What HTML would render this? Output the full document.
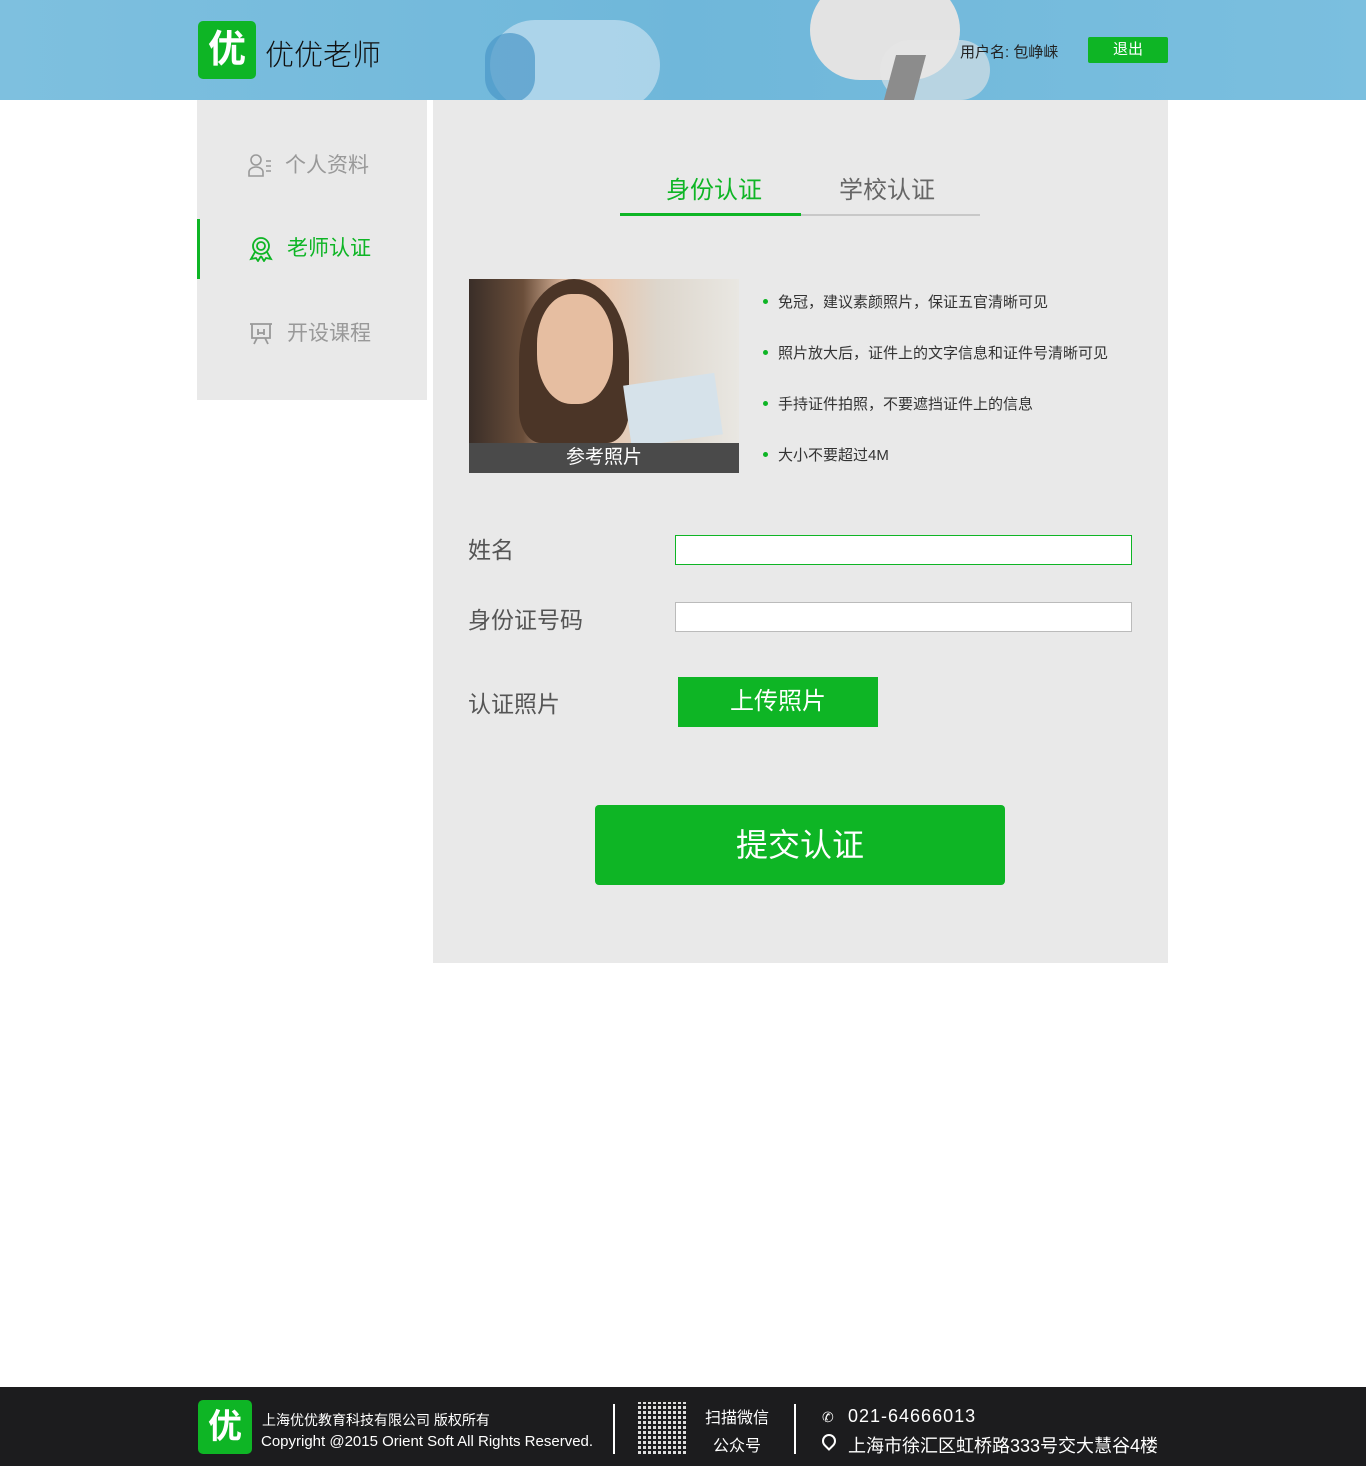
<!DOCTYPE html>
<html><head><meta charset="utf-8"><style>
*{margin:0;padding:0;box-sizing:border-box}
body{width:1366px;height:1466px;position:relative;background:#fff;font-family:"Liberation Sans","Noto Sans CJK SC",sans-serif;overflow:hidden}
.abs{position:absolute}
#hdr{left:0;top:0;width:1366px;height:100px;background:linear-gradient(90deg,#7ec0df,#6fb7da 50%,#7bbfdf);overflow:hidden}
.logo{background:#0eb525;border-radius:5px;color:#fff;font-weight:bold;text-align:center}
.side{left:197px;top:100px;width:230px;height:300px;background:#e9e9e9}
.nav{position:absolute;left:0;width:230px;height:60px;line-height:60px;font-size:21px;color:#999;padding-left:90px}
.main{left:433px;top:100px;width:735px;height:863px;background:#e9e9e9}
.lbl{position:absolute;font-size:23px;color:#555}
.inp{position:absolute;left:242px;width:457px;height:30px;background:#fff;border:1px solid #bbb}
.tip{position:absolute;left:345px;font-size:15px;color:#333}
.tip:before{content:"";position:absolute;left:-15px;top:8px;width:5px;height:5px;border-radius:50%;background:#0eb525}
#ftr{left:0;top:1387px;width:1366px;height:79px;background:#1c1c1e;color:#fff}
</style></head><body>
<div id="hdr" class="abs">
 <div class="abs" style="left:490px;top:20px;width:170px;height:90px;border-radius:60px;background:rgba(220,235,245,.55)"></div>
 <div class="abs" style="left:485px;top:33px;width:50px;height:70px;border-radius:30px;background:#4a97c8;opacity:.7"></div>
 <div class="abs" style="left:810px;top:-20px;width:150px;height:100px;border-radius:50px;background:#e3e3e3"></div>
 <div class="abs" style="left:880px;top:40px;width:110px;height:60px;border-radius:40px;background:rgba(230,230,230,.6)"></div>
 <div class="abs" style="left:890px;top:55px;width:30px;height:45px;background:#8c8c8c;transform:skewX(-15deg)"></div>
 <div class="abs logo" style="left:198px;top:21px;width:58px;height:58px;font-size:38px;line-height:58px">优</div>
 <div class="abs" style="left:265px;top:32px;font-size:29px;color:#111;font-weight:300">优优老师</div>
 <div class="abs" style="left:960px;top:41px;font-size:15px;color:#222">用户名: 包峥崃</div>
 <div class="abs" style="left:1088px;top:37px;width:80px;height:26px;background:#0eb525;border-radius:2px;color:#fff;font-size:15px;text-align:center;line-height:26px">退出</div>
</div>
<div class="abs side">
 <div class="nav" style="top:36px;padding-left:88px">个人资料</div>
 <svg class="abs" style="left:50px;top:53px" width="26" height="26" viewBox="0 0 26 26" fill="none" stroke="#999" stroke-width="1.6"><circle cx="9" cy="7" r="5"/><path d="M2 23v-4a7 5 0 0 1 14 0v4z"/><path d="M19 8h5M19 13h5M19 18h5"/></svg>
 <div class="abs" style="left:0;top:119px;width:3px;height:60px;background:#0eb525"></div>
 <div class="nav" style="top:119px;color:#0eb525">老师认证</div>
 <svg class="abs" style="left:52px;top:136px" width="24" height="26" viewBox="0 0 24 26" fill="none" stroke="#0eb525" stroke-width="1.8"><circle cx="12" cy="10" r="8"/><circle cx="12" cy="10" r="4"/><path d="M6 16l-4 7 5-1 2 3 3-5M18 16l4 7-5-1-2 3-3-5"/></svg>
 <div class="nav" style="top:204px">开设课程</div>
 <svg class="abs" style="left:52px;top:222px" width="24" height="24" viewBox="0 0 24 24" fill="none" stroke="#999" stroke-width="1.8"><path d="M1 2h22M3 2v14h18V2M8 16l-3 6M16 16l3 6M9 7v6M15 7v6M9 11h6"/></svg>
</div>
<div class="abs main">
 <div class="abs" style="left:187px;top:114px;width:360px;height:2px;background:#c8c8c8"></div>
 <div class="abs" style="left:187px;top:113px;width:181px;height:3px;background:#0eb525"></div>
 <div class="abs" style="left:233px;top:70px;font-size:24px;color:#0eb525">身份认证</div>
 <div class="abs" style="left:406px;top:70px;font-size:24px;color:#666">学校认证</div>
 <div class="abs" style="left:36px;top:179px;width:270px;height:194px;background:linear-gradient(90deg,#3a2e28 0,#6a4e3a 20%,#d9b49a 35%,#e8c6ad 50%,#ddd6cc 70%,#e9e7e2 100%);overflow:hidden">
  <div class="abs" style="left:50px;top:0;width:110px;height:164px;border-radius:50% 50% 20% 20%;background:#4b3527"></div>
  <div class="abs" style="left:68px;top:15px;width:76px;height:110px;border-radius:45%;background:#e6bea1"></div>
  <div class="abs" style="left:158px;top:100px;width:92px;height:62px;background:#d6e2ea;transform:rotate(-8deg)"></div>
  <div class="abs" style="left:0;top:164px;width:270px;height:30px;background:#4a4a4a;color:#fff;font-size:19px;text-align:center;line-height:30px">参考照片</div>
 </div>
 <div class="tip" style="top:191px">免冠，建议素颜照片，保证五官清晰可见</div>
 <div class="tip" style="top:242px">照片放大后，证件上的文字信息和证件号清晰可见</div>
 <div class="tip" style="top:293px">手持证件拍照，不要遮挡证件上的信息</div>
 <div class="tip" style="top:344px">大小不要超过4M</div>
 <div class="lbl" style="left:35px;top:431px">姓名</div>
 <div class="inp" style="top:435px;border-color:#0eb525"></div>
 <div class="lbl" style="left:35px;top:501px">身份证号码</div>
 <div class="inp" style="top:502px"></div>
 <div class="lbl" style="left:35px;top:585px">认证照片</div>
 <div class="abs" style="left:245px;top:577px;width:200px;height:50px;background:#0eb525;color:#fff;font-size:24px;text-align:center;line-height:50px">上传照片</div>
 <div class="abs" style="left:162px;top:705px;width:410px;height:80px;background:#0eb525;border-radius:4px;color:#fff;font-size:32px;text-align:center;line-height:80px">提交认证</div>
</div>
<div id="ftr" class="abs">
 <div class="abs logo" style="left:198px;top:13px;width:54px;height:54px;font-size:34px;line-height:54px">优</div>
 <div class="abs" style="left:262px;top:23px;font-size:14px">上海优优教育科技有限公司 版权所有</div>
 <div class="abs" style="left:261px;top:46px;font-size:15px">Copyright @2015 Orient Soft All Rights Reserved.</div>
 <div class="abs" style="left:613px;top:17px;width:2px;height:50px;background:#fff"></div>
 <div class="abs" style="left:638px;top:15px;width:50px;height:52px;background:repeating-linear-gradient(0deg,transparent 0 3px,#1c1c1e 3px 5px),repeating-linear-gradient(90deg,#fff 0 3px,#1c1c1e 3px 5px);opacity:.85"></div>
 <div class="abs" style="left:705px;top:17px;font-size:16px">扫描微信</div>
 <div class="abs" style="left:713px;top:45px;font-size:16px">公众号</div>
 <div class="abs" style="left:794px;top:17px;width:2px;height:50px;background:#fff"></div>
 <div class="abs" style="left:822px;top:22px;font-size:14px">✆</div>
 <div class="abs" style="left:848px;top:19px;font-size:18px;letter-spacing:1px">021-64666013</div>
 <div class="abs" style="left:822px;top:47px;width:14px;height:14px;border:2px solid #fff;border-radius:50% 50% 50% 0;transform:rotate(-45deg)"></div>
 <div class="abs" style="left:848px;top:45px;font-size:18px">上海市徐汇区虹桥路333号交大慧谷4楼</div>
</div>
</body></html>
